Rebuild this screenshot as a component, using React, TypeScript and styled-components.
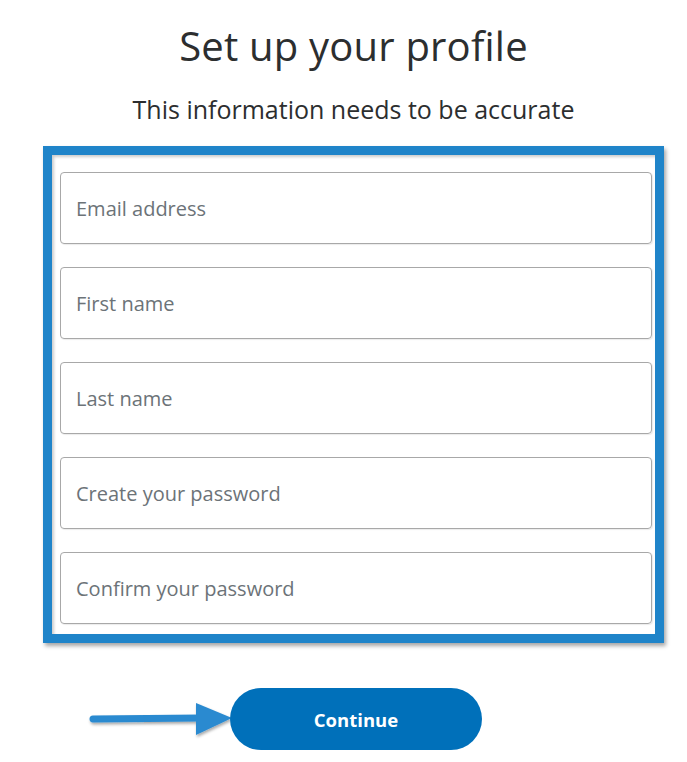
import React from 'react';
import styled, { createGlobalStyle } from 'styled-components';

const GlobalStyle = createGlobalStyle`
    body {
        margin: 0;
        background: #ffffff;
        font-family: "Open Sans", "Noto Sans", sans-serif;
    }
`;

const Page = styled.div`
    width: 621px;
    margin-left: 43px;
    padding-top: 22px;
`;

const Title = styled.h1`
    margin: 0;
    text-align: center;
    font-size: 40px;
    font-weight: 400;
    color: #2c2e2f;
    line-height: 48px;
    letter-spacing: 0.2px;
`;

const Subtitle = styled.p`
    margin: 24px 0 0;
    text-align: center;
    font-size: 25px;
    color: #2c2e2f;
    line-height: 30px;
`;

const FormBox = styled.div`
    margin-top: 22px;
    border: 9px solid #1f84c9;
    padding: 17px 3px 10px 8px;
    display: flex;
    flex-direction: column;
    gap: 23px;
    box-shadow: 2px 3px 4px rgba(0, 0, 0, 0.35), inset 2px 2px 3px rgba(0, 0, 0, 0.2);
`;

const Field = styled.div`
    box-sizing: border-box;
    height: 72px;
    border: 1px solid #a8a8a8;
    border-radius: 4px;
    display: flex;
    align-items: center;
    padding-left: 15px;
    font-size: 20px;
    color: #6c7378;
    box-shadow: 1px 1px 1px rgba(0, 0, 0, 0.08);
`;

const ActionRow = styled.div`
    display: flex;
    align-items: center;
    margin-top: 45px;
    margin-left: 46px;
`;

const Arrow = styled.svg`
    width: 143px;
    height: 44px;
    margin-right: -2px;
    overflow: visible;
`;

const ContinueButton = styled.button`
    width: 252px;
    height: 62px;
    border: none;
    border-radius: 31px;
    background: #0070ba;
    color: #ffffff;
    font-family: "Open Sans", "Noto Sans", sans-serif;
    font-size: 18.5px;
    font-weight: 700;
    cursor: pointer;
`;

const fields = ['Email address', 'First name', 'Last name', 'Create your password', 'Confirm your password'];

const App = () => {
    return (
        <Page>
            <GlobalStyle />
            <Title>Set up your profile</Title>
            <Subtitle>This information needs to be accurate</Subtitle>
            <FormBox>
                {fields.map((f) => (
                    <Field key={f}>{f}</Field>
                ))}
            </FormBox>
            <ActionRow>
                <Arrow viewBox="0 0 143 44">
                    <defs>
                        <filter id="arrowShadow" x="-10%" y="-30%" width="120%" height="160%">
                            <feDropShadow dx="1" dy="2" stdDeviation="1.5" floodColor="#000" floodOpacity="0.35" />
                        </filter>
                    </defs>
                    <g filter="url(#arrowShadow)">
                        <line x1="4" y1="22" x2="112" y2="21" stroke="#2a8ad0" strokeWidth="7" strokeLinecap="round" />
                        <polygon points="107,6 143,21 107,38" fill="#2a8ad0" />
                    </g>
                </Arrow>
                <ContinueButton>Continue</ContinueButton>
            </ActionRow>
        </Page>
    );
};

export default App;
